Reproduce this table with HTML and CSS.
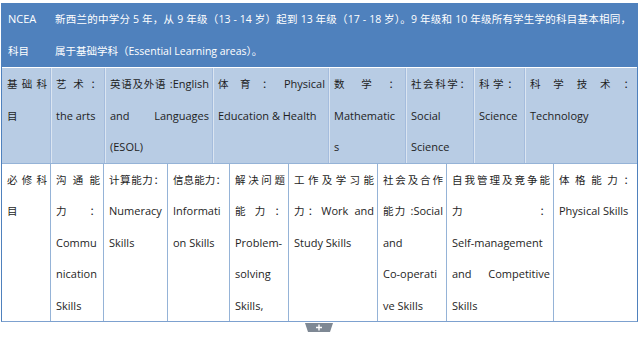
FILE: index.html
```html
<!DOCTYPE html>
<html lang="zh-CN">
<head>
<meta charset="utf-8">
<title>NCEA 科目</title>
<link rel="stylesheet" href="styles.css">
</head>
<body>
<div class="tbl">
  <div class="row row-head">
    <div class="cell">NCEA <span class="zh">科目</span></div>
    <div class="cell head-text">
      <div class="head-line">新西兰的中学分 5 年，从 9 年级（13 - 14 岁）起到 13 年级（17 - 18 岁）。9 年级和 10 年级所有学生学的科目基本相同，</div>
      <div>属于基础学科（Essential Learning areas）。</div>
    </div>
  </div>
  <div class="row row-basic">
    <div class="cell"><span class="zh">基础科目</span></div>
    <div class="cell"><span class="zh">艺术：</span>the arts</div>
    <div class="cell"><span class="zh">英语及外语</span> :English and Languages (ESOL)</div>
    <div class="cell"><span class="zh">体育：</span>Physical Education &amp; Health</div>
    <div class="cell cell-wide-pad"><span class="zh">数学：</span>Mathematics</div>
    <div class="cell"><span class="zh">社会科学：</span>Social Science</div>
    <div class="cell"><span class="zh zh-spaced">科学：</span>Science</div>
    <div class="cell"><span class="zh">科学技术：</span>Technology</div>
  </div>
  <div class="row row-core">
    <div class="cell"><span class="zh">必修科目</span></div>
    <div class="cell"><span class="zh">沟通能力：</span>Communication Skills</div>
    <div class="cell"><span class="zh">计算能力：</span>Numeracy Skills</div>
    <div class="cell"><span class="zh">信息能力：</span>Information Skills</div>
    <div class="cell"><span class="zh">解决问题能力：</span>Problem-solving Skills,</div>
    <div class="cell"><span class="zh">工作及学习能力：</span>Work and Study Skills</div>
    <div class="cell"><span class="zh">社会及合作能力</span> :Social and<br>Co-operati<br>ve Skills</div>
    <div class="cell"><span class="zh">自我管理及竞争能力：</span><span class="nw">Self-management</span> and Competitive Skills</div>
    <div class="cell"><span class="zh">体格能力：</span>Physical Skills</div>
  </div>
</div>
<div class="expand">
  <svg class="expand-tab" width="28" height="9" viewBox="0 0 28 9" aria-hidden="true">
    <path d="M0 0 H28 L25 9 H3 Z" fill="#7e8894"/>
    <path d="M14 1.5 V7.5 M11 4.5 H17" stroke="#ffffff" stroke-width="1.4"/>
  </svg>
</div>
</body>
</html>
```
FILE: styles.css
```css
* { box-sizing: border-box; }

html, body {
  margin: 0;
  padding: 0;
  background: #ffffff;
}

body {
  font-family: "Open Sans", "Noto Sans CJK SC", sans-serif;
  font-size: 11px;
  color: #1e1e1e;
}

.zh {
  font-family: "Noto Sans CJK SC", sans-serif;
  font-size: 10.5px;
}

.zh-spaced {
  letter-spacing: 3.3px;
}

.nw {
  white-space: nowrap;
}

.tbl {
  width: 637px;
  margin: 3px 0 0 1px;
  border-left: 1px solid #4f81bd;
  border-right: 1px solid #4f81bd;
  border-bottom: 1px solid #7da1cf;
}

.row {
  display: grid;
}

.cell {
  padding: 0 3px 0 5px;
  line-height: 31.5px;
  text-align: justify;
  word-break: normal;
  overflow-wrap: anywhere;
}

.cell-wide-pad {
  padding-right: 6px;
}

.row-head {
  grid-template-columns: 47px 588px;
  background: #4f81bd;
  color: #ffffff;
}

.row-head .cell {
  line-height: 32px;
  padding-left: 6px;
}

.head-text {
  font-size: 10.5px;
  padding-right: 6px;
}

.head-text .zh {
  font-size: inherit;
}

.head-line {
  text-align: justify;
  text-align-last: justify;
}

.row-basic {
  grid-template-columns: 48px 54px 108px 116px 77px 68px 51px 113px;
  background: #b8cce4;
  border-top: 1px solid #ffffff;
}

.row-basic .cell + .cell {
  border-left: 1px solid #a4bcdd;
  box-shadow: inset 1px 0 0 #dbe5f1;
}

.row-core {
  grid-template-columns: 48px 53px 64px 62px 59px 89px 69px 107px 84px;
  background: #ffffff;
  border-top: 1px solid #95b3d7;
}

.row-core .cell + .cell {
  border-left: 1px solid #95b3d7;
}

.expand {
  display: flex;
  justify-content: center;
  padding-top: 1px;
  padding-right: 2px;
}

.expand-tab {
  display: block;
}
```
